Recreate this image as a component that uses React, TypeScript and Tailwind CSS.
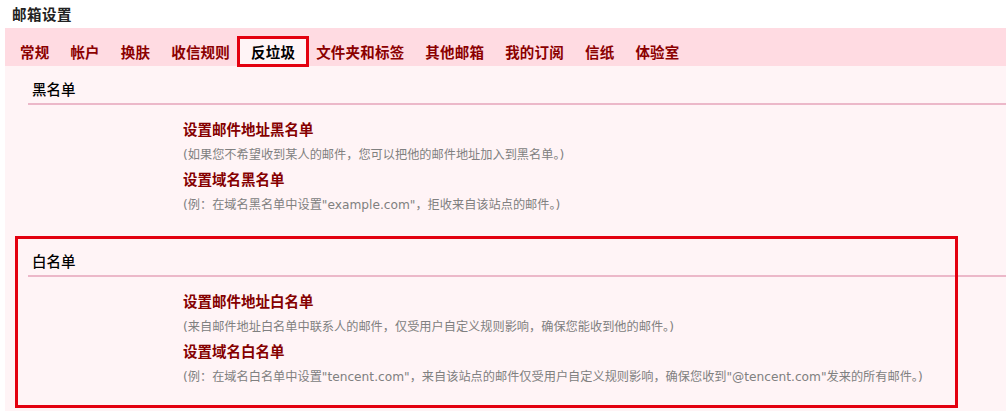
const tabs = ['常规', '帐户', '换肤', '收信规则', '反垃圾', '文件夹和标签', '其他邮箱', '我的订阅', '信纸', '体验室'];

type Item = { title: string; desc: string };

const sections: { name: string; items: Item[] }[] = [
  {
    name: '黑名单',
    items: [
      { title: '设置邮件地址黑名单', desc: '(如果您不希望收到某人的邮件，您可以把他的邮件地址加入到黑名单。)' },
      { title: '设置域名黑名单', desc: '(例：在域名黑名单中设置"example.com"，拒收来自该站点的邮件。)' },
    ],
  },
  {
    name: '白名单',
    items: [
      { title: '设置邮件地址白名单', desc: '(来自邮件地址白名单中联系人的邮件，仅受用户自定义规则影响，确保您能收到他的邮件。)' },
      { title: '设置域名白名单', desc: '(例：在域名白名单中设置"tencent.com"，来自该站点的邮件仅受用户自定义规则影响，确保您收到"@tencent.com"发来的所有邮件。)' },
    ],
  },
];

function Section({ name, items }: { name: string; items: Item[] }) {
  return (
    <div className="flex flex-col">
      <div className="ml-[23px] border-b-2 border-[#ecb8c9] pl-[4px] pb-[4px] text-[14.5px] font-medium leading-[20px] text-black">
        {name}
      </div>
      <div className="flex flex-col pl-[178px] pt-[11px]">
        {items.map(it => (
          <div key={it.title} className="flex flex-col">
            <p className="text-[14.5px] font-bold leading-[25px] text-[#850000]">{it.title}</p>
            <p className="pt-[3px] font-['DejaVu_Sans','Noto_Sans_CJK_SC',sans-serif] text-[12.2px] leading-[22px] text-[#808080]">{it.desc}</p>
          </div>
        ))}
      </div>
    </div>
  );
}

export default function App() {
  return (
    <div className="relative flex h-[411px] w-[1006px] flex-col overflow-hidden bg-white font-['Noto_Sans_CJK_SC',sans-serif]">
      <div className="flex h-[28px] items-center pl-[12px] text-[14.5px] font-bold tracking-[0.5px] text-[#222]">邮箱设置</div>

      <div className="ml-[5px] flex h-[38px] items-start gap-[21px] bg-[#ffdbe2] pl-[15px] pt-[8px]">
        {tabs.map(t => {
          const active = t === '反垃圾';
          return (
            <div key={t} className={`relative flex h-[31px] items-center whitespace-nowrap text-[14.5px] font-bold tracking-[0.2px] ${active ? 'text-black' : 'text-[#8b0000]'}`}>
              {active && <span className="absolute -left-[14px] -right-[14px] top-0 bottom-0 bg-[#fff4f6]" />}
              <span className="relative">{t}</span>
              {active && <span className="absolute -left-[14px] -right-[14px] top-0 bottom-0 border-[3px] border-[#e3000f]" />}
            </div>
          );
        })}
      </div>

      <div className="ml-[5px] flex flex-1 flex-col gap-[35px] bg-[#fff4f6] pt-[13px]">
        {sections.map(s => <Section key={s.name} name={s.name} items={s.items} />)}
      </div>

      {/* red annotation around the white list */}
      <div className="pointer-events-none absolute left-[15px] top-[236px] h-[172px] w-[943px] border-[3px] border-[#e3000f]" />
    </div>
  );
}
